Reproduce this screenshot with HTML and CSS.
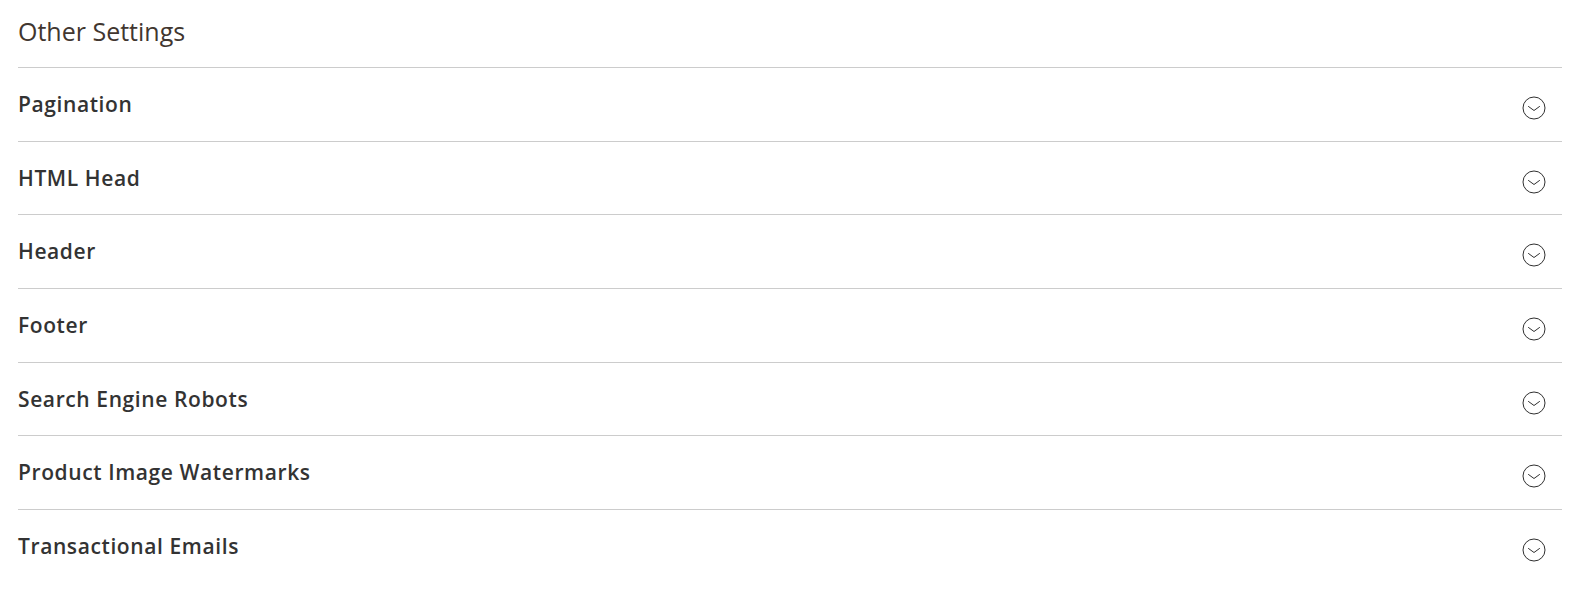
FILE: index.html
```html
<!DOCTYPE html>
<html>
<head>
<meta charset="utf-8">
<link rel="stylesheet" href="styles.css">
</head>
<body>
<div class="section">
  <div class="section-title">Other Settings</div>
  <div class="rows">
    <div class="row"><span class="row-title">Pagination</span><svg class="chev" viewBox="0 0 24 24"><circle cx="12" cy="12" r="11"/><polyline points="6.5,10.5 12,14.5 17.5,10.5"/></svg></div>
    <div class="row"><span class="row-title">HTML Head</span><svg class="chev" viewBox="0 0 24 24"><circle cx="12" cy="12" r="11"/><polyline points="6.5,10.5 12,14.5 17.5,10.5"/></svg></div>
    <div class="row"><span class="row-title">Header</span><svg class="chev" viewBox="0 0 24 24"><circle cx="12" cy="12" r="11"/><polyline points="6.5,10.5 12,14.5 17.5,10.5"/></svg></div>
    <div class="row"><span class="row-title">Footer</span><svg class="chev" viewBox="0 0 24 24"><circle cx="12" cy="12" r="11"/><polyline points="6.5,10.5 12,14.5 17.5,10.5"/></svg></div>
    <div class="row"><span class="row-title">Search Engine Robots</span><svg class="chev" viewBox="0 0 24 24"><circle cx="12" cy="12" r="11"/><polyline points="6.5,10.5 12,14.5 17.5,10.5"/></svg></div>
    <div class="row"><span class="row-title">Product Image Watermarks</span><svg class="chev" viewBox="0 0 24 24"><circle cx="12" cy="12" r="11"/><polyline points="6.5,10.5 12,14.5 17.5,10.5"/></svg></div>
    <div class="row"><span class="row-title">Transactional Emails</span><svg class="chev" viewBox="0 0 24 24"><circle cx="12" cy="12" r="11"/><polyline points="6.5,10.5 12,14.5 17.5,10.5"/></svg></div>
  </div>
</div>
</body>
</html>
```

FILE: styles.css
```css
html, body {
  margin: 0;
  padding: 0;
  background: #ffffff;
}
body {
  font-family: "Open Sans", "Liberation Sans", sans-serif;
}
.section {
  padding: 0 20px 0 18px;
}
.section-title {
  font-size: 25px;
  font-weight: 400;
  line-height: 30px;
  color: #41362f;
  padding-top: 16px;
  height: 51px;
}
.row {
  display: flex;
  justify-content: space-between;
  align-items: center;
  border-top: 1px solid #cccccc;
  padding: 24px 0 24.67px;
}
.row-title {
  font-size: 21px;
  font-weight: 600;
  line-height: 24px;
  letter-spacing: 0.6px;
  color: #333333;
}
.chev {
  width: 24px;
  height: 24px;
  margin-right: 16px;
  margin-top: 4px;
  margin-bottom: -4px;
  fill: none;
  stroke: #303030;
  stroke-width: 1;
}
.chev polyline {
  stroke-linecap: round;
  stroke-linejoin: round;
}
```
